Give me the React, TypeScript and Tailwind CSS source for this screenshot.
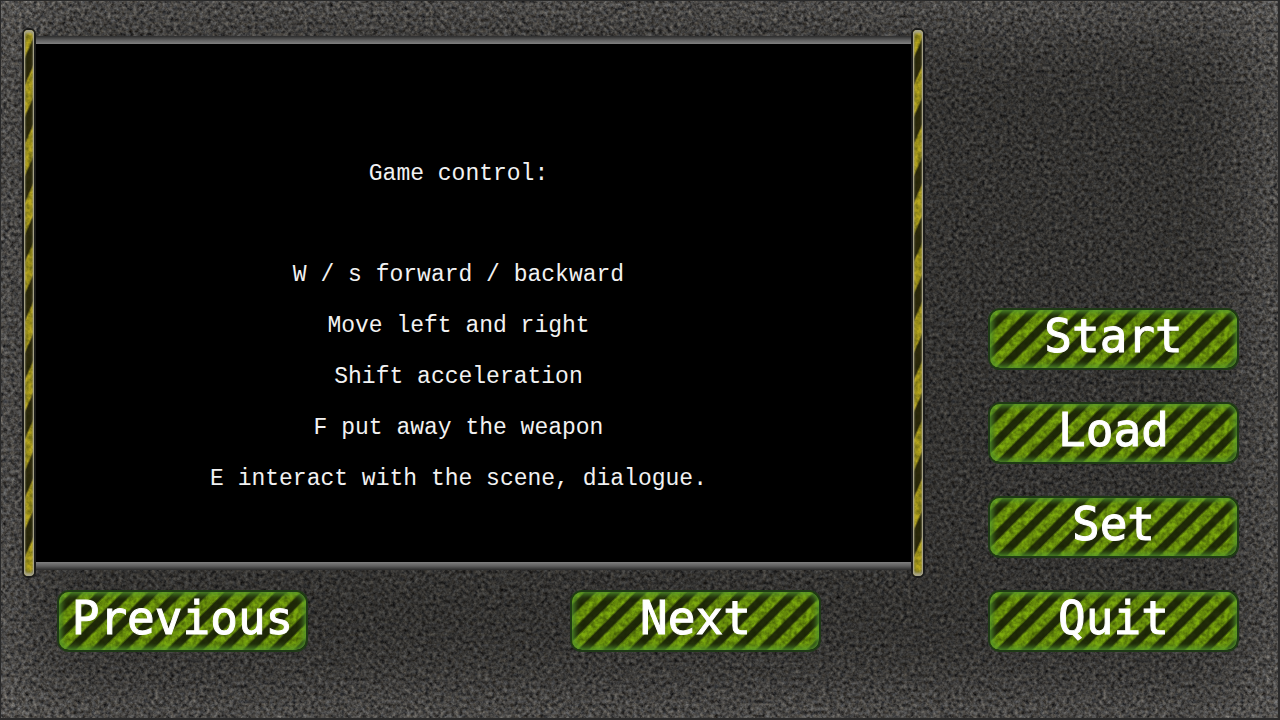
import { ReactNode } from "react";

const controls = [
  "W / s forward / backward",
  "Move left and right",
  "Shift acceleration",
  "F put away the weapon",
  "E interact with the scene, dialogue.",
];

const menuItems = ["Start", "Load", "Set", "Quit"];

// grain filters shared by the wall and the button skins
function GrainFilters() {
  return (
    <svg className="absolute h-0 w-0" aria-hidden="true">
      <filter id="stone" x="0" y="0" width="100%" height="100%" colorInterpolationFilters="sRGB">
        <feTurbulence type="fractalNoise" baseFrequency="0.27" numOctaves="3" seed="7" />
        <feColorMatrix
          values="0.85 0.3 0 0 -0.09
                  0.85 0.26 0.04 0 -0.1
                  0.85 0.2 0.1 0 -0.1
                  0 0 0 0 1"
        />
      </filter>
      <filter id="grime" x="0" y="0" width="100%" height="100%" colorInterpolationFilters="sRGB">
        <feTurbulence type="fractalNoise" baseFrequency="0.2" numOctaves="3" seed="3" />
        <feColorMatrix
          values="0 0 0 0 0.08
                  0 0 0 0 0.12
                  0 0 0 0 0
                  1.5 0 0 0 -0.4"
        />
      </filter>
    </svg>
  );
}

function Grain({ filter, className }: { filter: string; className: string }) {
  return (
    <svg
      className={`pointer-events-none absolute inset-0 h-full w-full ${className}`}
      aria-hidden="true"
    >
      <rect width="100%" height="100%" filter={`url(#${filter})`} />
    </svg>
  );
}

function HazardButton({ children }: { children: ReactNode }) {
  return (
    <button
      type="button"
      className="relative flex h-[62px] w-[251px] shrink-0 justify-center overflow-hidden rounded-xl border-2 border-[#1f3a16] bg-[repeating-linear-gradient(135deg,#7daa0e_0px,#7daa0e_8px,#222c0a_10px,#222c0a_16px,#7daa0e_18px)] font-['DejaVu_Sans_Mono',monospace] text-[46px] leading-[52px] text-white"
    >
      <Grain filter="grime" className="opacity-60" />
      <span className="absolute inset-0 rounded-[10px] shadow-[inset_0_0_6px_2px_#559a30]" />
      <span className="relative [-webkit-text-stroke:1px_white]">{children}</span>
    </button>
  );
}

function HazardPost() {
  return (
    <div className="relative w-[14px] shrink-0 overflow-hidden rounded-md border-2 border-[#1b1b1a] bg-[repeating-linear-gradient(114deg,#b8a71e_0px,#b8a71e_11px,#2f2a0c_13px,#2f2a0c_22px,#b8a71e_24px)]">
      <Grain filter="grime" className="opacity-50" />
      <div className="absolute inset-0 rounded-sm shadow-[inset_1px_0_1px_#aaa68a,inset_-1px_0_1px_#aaa68a,inset_0_3px_3px_#a8a693,inset_0_-3px_3px_#a8a693]" />
    </div>
  );
}

function Screen() {
  return (
    <section className="flex flex-1">
      <HazardPost />
      <div className="my-2 flex flex-1 flex-col">
        <div className="h-2 bg-linear-to-b from-[#2c2c2c] via-[#5e5e5e] to-[#808080]" />
        <div className="flex-1 bg-black pt-[105px] pr-[30px] text-center font-['Liberation_Mono',monospace] text-[23px] leading-[51px] text-[#f2f2f2]">
          <h1 className="mb-[50px]">Game control:</h1>
          {controls.map((line) => (
            <p key={line}>{line}</p>
          ))}
        </div>
        <div className="h-2 bg-linear-to-b from-[#808080] via-[#5e5e5e] to-[#2c2c2c]" />
      </div>
      <HazardPost />
    </section>
  );
}

export default function App() {
  return (
    <main className="relative isolate flex min-h-screen justify-between overflow-hidden bg-[#353533] pt-7 pr-[41px] pb-[68px] pl-[22px]">
      <GrainFilters />
      <div className="absolute inset-0 -z-10 shadow-[inset_0_0_100px_#686866]" />
      <Grain filter="stone" className="-z-10 mix-blend-overlay" />
      <div className="absolute inset-0 -z-10 border-t border-r-2 border-b-2 border-l border-[#2a2a2a]" />

      <div className="mr-[63px] flex flex-1 flex-col gap-3">
        <Screen />
        <div className="flex justify-between pr-[104px] pl-[35px]">
          <HazardButton>Previous</HazardButton>
          <HazardButton>Next</HazardButton>
        </div>
      </div>

      <nav className="flex flex-col justify-end gap-8">
        {menuItems.map((item) => (
          <HazardButton key={item}>{item}</HazardButton>
        ))}
      </nav>
    </main>
  );
}
